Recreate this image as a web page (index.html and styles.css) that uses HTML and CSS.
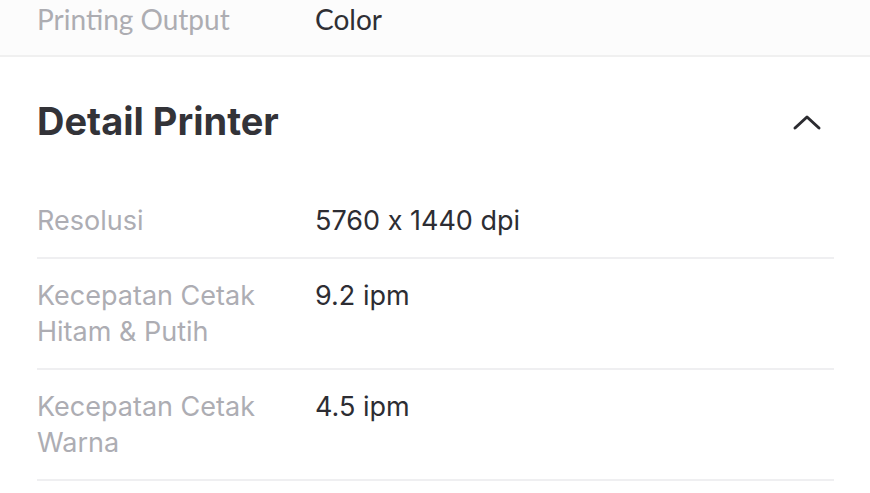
FILE: index.html
```html
<!DOCTYPE html>
<html>
<head>
<meta charset="utf-8">
<link rel="stylesheet" href="styles.css">
</head>
<body>
<div class="prev-row">
  <span class="prev-label">Printing Output</span>
  <span class="prev-value">Color</span>
</div>
<section class="section">
  <div class="section-head">
    <h2 class="section-title">Detail Printer</h2>
    <svg class="chevron" width="30" height="18" viewBox="0 0 30 18"><path d="M3 15 L15 4 L27 15" fill="none" stroke="#2b2b30" stroke-width="3" stroke-linecap="round" stroke-linejoin="round"/></svg>
  </div>
  <div class="spec">
    <div class="spec-label">Resolusi</div>
    <div class="spec-value">5760 x 1440 dpi</div>
  </div>
  <div class="spec">
    <div class="spec-label">Kecepatan Cetak<br>Hitam &amp; Putih</div>
    <div class="spec-value">9.2 ipm</div>
  </div>
  <div class="spec">
    <div class="spec-label">Kecepatan Cetak<br>Warna</div>
    <div class="spec-value">4.5 ipm</div>
  </div>
</section>
</body>
</html>
```

FILE: styles.css
```css
html, body {
  margin: 0;
  padding: 0;
  background: #ffffff;
}
body {
  font-family: Inter, "Noto Sans", sans-serif;
  font-feature-settings: "calt" 0;
  overflow: hidden;
}
.prev-row {
  display: grid;
  grid-template-columns: 278px 1fr;
  padding: 1px 37px 18px;
  line-height: 36px;
  font-family: Lato, "Noto Sans", sans-serif;
  font-size: 28px;
  background: #fcfcfc;
  border-bottom: 2px solid #f0f0f0;
}
.prev-label { color: #adadb2; }
.prev-value { color: #2f2f34; }
.section {
  padding: 0 36px 0 37px;
}
.section-head {
  height: 127px;
  display: flex;
  align-items: center;
  justify-content: space-between;
}
.section-title {
  margin: 0;
  font-size: 38px;
  font-weight: 700;
  color: #333338;
  letter-spacing: 0;
}
.chevron {
  margin-right: 12px;
  margin-top: 2px;
}
.spec {
  display: grid;
  grid-template-columns: 278px 1fr;
  padding: 19px 0 18px;
  border-bottom: 2px solid #efeff1;
  line-height: 36px;
  font-size: 27px;
}
.spec-label { color: #adadb3; }
.spec-value { color: #2d2d33; }
```
